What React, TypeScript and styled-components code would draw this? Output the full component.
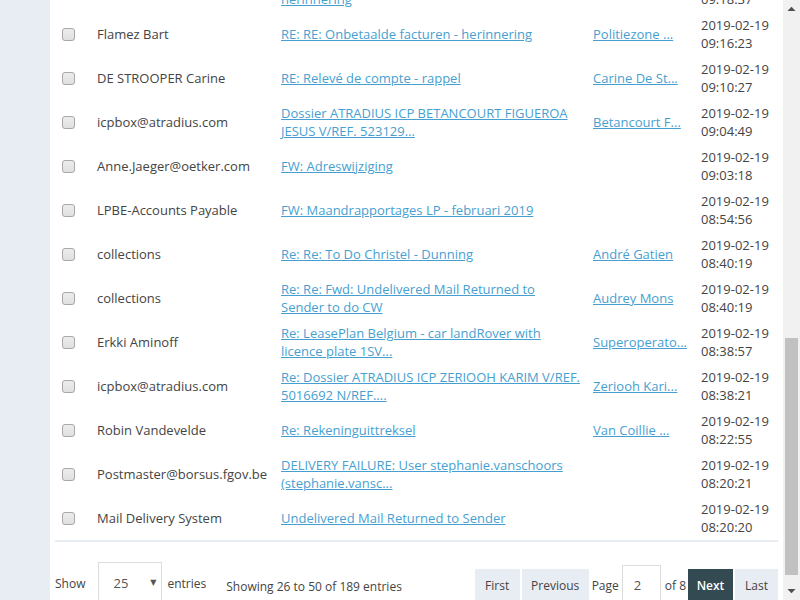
import React, { useLayoutEffect, useRef, useState } from "react";
import styled, { createGlobalStyle } from "styled-components";

const Global = createGlobalStyle`
  html, body { margin: 0; padding: 0; height: 100%; overflow: hidden; }
  body { font-family: "Open Sans", "DejaVu Sans", sans-serif; font-size: 13px; color: #444; }
  #root { height: 100%; }
  * { box-sizing: border-box; }
`;

const Frame = styled.div`
  display: flex;
  height: 100vh;
`;

const Viewport = styled.div`
  flex: 1;
  min-width: 0;
  overflow: hidden;
  background: #fff;
`;

const ScrollBar = styled.div`
  width: 17px;
  flex-shrink: 0;
  display: flex;
  flex-direction: column;
  background: #f1f1f1;
`;

const ScrollArrow = styled.div`
  height: 17px;
  flex-shrink: 0;
  display: flex;
  align-items: center;
  justify-content: center;
`;

const ScrollTrack = styled.div`
  flex: 1;
  display: flex;
  flex-direction: column;
  padding: 0 2px;
`;

const Thumb = styled.div`
  background: #c1c1c1;
  flex-shrink: 0;
`;

const Page = styled.div`
  display: flex;
  min-height: 100%;
`;

const Sidebar = styled.aside`
  width: 50px;
  flex-shrink: 0;
  background: #e8ecf3;
`;

const Main = styled.main`
  flex: 1;
  min-width: 0;
  background: #fff;
  padding: 0 5px 14px;
`;

const PageHeader = styled.header`
  display: flex;
  align-items: center;
  justify-content: space-between;
  height: 96px;
  padding: 0 8px;
  border-bottom: 2px solid #e8ecf3;
`;

const Title = styled.h1`
  margin: 0;
  font-size: 22px;
  font-weight: 400;
  color: #333;
`;

const Toolbar = styled.div`
  display: flex;
  align-items: center;
  gap: 8px;
  height: 112px;
  padding: 0 8px;
`;

const ToolButton = styled.button`
  height: 32px;
  padding: 0 12px;
  border: 0;
  background: #e8ecf3;
  color: #333;
  font: inherit;
`;

const SearchBox = styled.input`
  margin-left: auto;
  width: 220px;
  height: 32px;
  border: 1px solid #ddd;
  padding: 0 10px;
  font: inherit;
`;

const Table = styled.table`
  width: 100%;
  border-collapse: collapse;
  table-layout: fixed;
  border-bottom: 2px solid #e8ecf3;
`;

const Col = styled.col<{ $w?: number }>`
  width: ${(p) => (p.$w ? `${p.$w}px` : "auto")};
`;

const Th = styled.th`
  height: 44px;
  padding: 4px 4px 4px 8px;
  text-align: left;
  font-weight: 600;
  color: #333;
  border-bottom: 2px solid #e8ecf3;
`;

const Row = styled.tr`
  height: 44px;
`;

const Td = styled.td<{ $check?: boolean }>`
  padding: ${(p) => (p.$check ? "4px 4px 4px 7px" : "4px 4px 4px 8px")};
  vertical-align: middle;
  line-height: 18px;
  font-size: 13px;
  color: #444;
  overflow-wrap: break-word;
`;

const Check = styled.input.attrs({ type: "checkbox" })`
  appearance: none;
  display: block;
  margin: 0;
  width: 13px;
  height: 13px;
  border: 1px solid #a8a8a8;
  border-radius: 3px;
  background: linear-gradient(#ececec, #e0e0e0);
`;

const Link = styled.a`
  color: #479fd1;
  text-decoration: underline;
  cursor: pointer;
`;

const Footer = styled.div`
  display: flex;
  align-items: flex-start;
  padding-top: 20px;
  font-size: 12px;
`;

const ShowGroup = styled.div`
  display: flex;
  align-items: center;
  height: 42px;
  color: #444;
`;

const SelectWrap = styled.div`
  position: relative;
  margin: 0 5px 0 13px;
  &::after {
    content: "▼";
    position: absolute;
    right: 6px;
    top: 14px;
    font-size: 8px;
    color: #555;
    pointer-events: none;
  }
`;

const Select = styled.select`
  appearance: none;
  width: 64px;
  height: 42px;
  border: 1px solid #ddd;
  border-radius: 0;
  background: #fff;
  padding: 0 0 0 14px;
  font-family: inherit;
  font-size: 13px;
  color: #555;
`;

const Info = styled.div`
  margin: 16px 0 0 20px;
  line-height: 18px;
  color: #444;
`;

const Pager = styled.div`
  margin: 3px 0 0 auto;
  display: flex;
  align-items: center;
  gap: 2px;
`;

const PageButton = styled.button<{ $active?: boolean; $min?: number }>`
  height: 32px;
  min-width: ${(p) => p.$min ?? 45}px;
  padding: 0 8px;
  border: 0;
  border-radius: 0;
  font-family: inherit;
  font-size: 12px;
  font-weight: ${(p) => (p.$active ? 600 : 400)};
  background: ${(p) => (p.$active ? "#344a53" : "#e8ecf3")};
  color: ${(p) => (p.$active ? "#fff" : "#444")};
`;

const PagerLabel = styled.span<{ $ml?: number; $mr?: number }>`
  color: #444;
  margin: 0 ${(p) => p.$mr ?? 1}px 0 ${(p) => p.$ml ?? 1}px;
`;

const PageInput = styled.input`
  width: 39px;
  height: 40px;
  border: 1px solid #ddd;
  padding: 0 0 0 11px;
  font-family: inherit;
  font-size: 13px;
  color: #555;
`;

type Mail = { from: string; subject: string; assignee?: string; date: string };

const earlier: Mail[] = [
  { from: "facturatie@proximus.be", subject: "Herinnering factuur 20190211", assignee: "Jan Peeters", date: "2019-02-19 10:42:11" },
  { from: "collections", subject: "Re: Betalingsplan klant 40221", assignee: "André Gatien", date: "2019-02-19 10:31:05" },
  { from: "info@engie.be", subject: "Uw maandelijks overzicht", date: "2019-02-19 10:20:48" },
  { from: "icpbox@atradius.com", subject: "Dossier ATRADIUS ICP JANSSENS PETER V/REF. 522871...", assignee: "Janssens P...", date: "2019-02-19 10:12:30" },
  { from: "Marc Dubois", subject: "RE: Aanmaning", assignee: "Audrey Mons", date: "2019-02-19 10:05:02" },
  { from: "LPBE-Accounts Payable", subject: "FW: Creditnota januari 2019", date: "2019-02-19 09:58:44" },
  { from: "collections", subject: "Re: To Do Christel - Dunning", assignee: "André Gatien", date: "2019-02-19 09:51:17" },
  { from: "Sophie Claes", subject: "Vraag omtrent factuur", assignee: "Van Coillie ...", date: "2019-02-19 09:44:39" },
  { from: "noreply@bpost.be", subject: "Uw zending is onderweg", date: "2019-02-19 09:40:03" },
  { from: "Erkki Aminoff", subject: "Re: LeasePlan Belgium - contract update", assignee: "Superoperato...", date: "2019-02-19 09:33:26" },
  { from: "Robin Vandevelde", subject: "Re: Openstaande posten", assignee: "Van Coillie ...", date: "2019-02-19 09:27:50" },
  { from: "DE STROOPER Carine", subject: "RE: Relevé de compte", assignee: "Carine De St...", date: "2019-02-19 09:21:14" },
  { from: "Politiezone Regio", subject: "RE: RE: RE: Onbetaalde facturen Politiezone - herinnering", assignee: "Politiezone ...", date: "2019-02-19 09:18:37" },
];

const visible: Mail[] = [
  { from: "Flamez Bart", subject: "RE: RE: Onbetaalde facturen - herinnering", assignee: "Politiezone ...", date: "2019-02-19 09:16:23" },
  { from: "DE STROOPER Carine", subject: "RE: Relevé de compte - rappel", assignee: "Carine De St...", date: "2019-02-19 09:10:27" },
  { from: "icpbox@atradius.com", subject: "Dossier ATRADIUS ICP BETANCOURT FIGUEROA JESUS V/REF. 523129...", assignee: "Betancourt F...", date: "2019-02-19 09:04:49" },
  { from: "Anne.Jaeger@oetker.com", subject: "FW: Adreswijziging", date: "2019-02-19 09:03:18" },
  { from: "LPBE-Accounts Payable", subject: "FW: Maandrapportages LP - februari 2019", date: "2019-02-19 08:54:56" },
  { from: "collections", subject: "Re: Re: To Do Christel - Dunning", assignee: "André Gatien", date: "2019-02-19 08:40:19" },
  { from: "collections", subject: "Re: Re: Fwd: Undelivered Mail Returned to Sender to do CW", assignee: "Audrey Mons", date: "2019-02-19 08:40:19" },
  { from: "Erkki Aminoff", subject: "Re: LeasePlan Belgium - car landRover with licence plate 1SV...", assignee: "Superoperato...", date: "2019-02-19 08:38:57" },
  { from: "icpbox@atradius.com", subject: "Re: Dossier ATRADIUS ICP ZERIOOH KARIM V/REF. 5016692 N/REF....", assignee: "Zeriooh Kari...", date: "2019-02-19 08:38:21" },
  { from: "Robin Vandevelde", subject: "Re: Rekeninguittreksel", assignee: "Van Coillie ...", date: "2019-02-19 08:22:55" },
  { from: "Postmaster@borsus.fgov.be", subject: "DELIVERY FAILURE: User stephanie.vanschoors (stephanie.vansc...", date: "2019-02-19 08:20:21" },
  { from: "Mail Delivery System", subject: "Undelivered Mail Returned to Sender", date: "2019-02-19 08:20:20" },
];

const MailRow = React.forwardRef<HTMLTableRowElement, { mail: Mail }>(({ mail }, ref) => (
  <Row ref={ref}>
    <Td $check>
      <Check />
    </Td>
    <Td>{mail.from}</Td>
    <Td>
      <Link>{mail.subject}</Link>
    </Td>
    <Td>{mail.assignee ? <Link>{mail.assignee}</Link> : null}</Td>
    <Td>{mail.date}</Td>
  </Row>
));

const Arrow = ({ up }: { up?: boolean }) => (
  <svg width="9" height="5" viewBox="0 0 9 5" aria-hidden="true">
    <path d={up ? "M0.5 5h8L4.5 0.8z" : "M0.5 0h8L4.5 4.2z"} fill="#505050" />
  </svg>
);

export default function App() {
  const scrollRef = useRef<HTMLDivElement>(null);
  const anchorRef = useRef<HTMLTableRowElement>(null);
  const trackRef = useRef<HTMLDivElement>(null);
  const [thumb, setThumb] = useState({ top: 0, height: 40 });

  useLayoutEffect(() => {
    const c = scrollRef.current;
    const a = anchorRef.current;
    const t = trackRef.current;
    if (!c || !a || !t) return;
    const offset = a.getBoundingClientRect().top - c.getBoundingClientRect().top + c.scrollTop;
    c.scrollTop = offset - 12;
    const trackH = t.clientHeight;
    const h = Math.max(20, (trackH * c.clientHeight) / c.scrollHeight);
    const maxScroll = c.scrollHeight - c.clientHeight;
    const top = maxScroll > 0 ? ((trackH - h) * c.scrollTop) / maxScroll : 0;
    setThumb({ top, height: h });
  }, []);

  return (
    <>
      <Global />
      <Frame>
        <Viewport ref={scrollRef}>
          <Page>
            <Sidebar />
            <Main>
              <PageHeader>
                <Title>E-mails</Title>
              </PageHeader>
              <Toolbar>
                <ToolButton>Toewijzen</ToolButton>
                <ToolButton>Archiveren</ToolButton>
                <SearchBox placeholder="Zoeken..." />
              </Toolbar>
              <Table>
                <colgroup>
                  <Col $w={34} />
                  <Col $w={184} />
                  <Col $w={312} />
                  <Col $w={108} />
                  <Col />
                </colgroup>
                <thead>
                  <tr>
                    <Th />
                    <Th>Van</Th>
                    <Th>Onderwerp</Th>
                    <Th>Toegewezen</Th>
                    <Th>Datum</Th>
                  </tr>
                </thead>
                <tbody>
                  {earlier.map((m, i) => (
                    <MailRow key={`e${i}`} mail={m} />
                  ))}
                  {visible.map((m, i) => (
                    <MailRow key={`v${i}`} mail={m} ref={i === 0 ? anchorRef : undefined} />
                  ))}
                </tbody>
              </Table>
              <Footer>
                <ShowGroup>
                  <span>Show</span>
                  <SelectWrap>
                    <Select defaultValue="25">
                      <option value="10">10</option>
                      <option value="25">25</option>
                      <option value="50">50</option>
                      <option value="100">100</option>
                    </Select>
                  </SelectWrap>
                  <span>entries</span>
                </ShowGroup>
                <Info>Showing 26 to 50 of 189 entries</Info>
                <Pager>
                  <PageButton>First</PageButton>
                  <PageButton $min={67}>Previous</PageButton>
                  <PagerLabel>Page</PagerLabel>
                  <PageInput defaultValue="2" />
                  <PagerLabel $ml={2} $mr={0}>of 8</PagerLabel>
                  <PageButton $active>Next</PageButton>
                  <PageButton $min={43}>Last</PageButton>
                </Pager>
              </Footer>
            </Main>
          </Page>
        </Viewport>
        <ScrollBar>
          <ScrollArrow>
            <Arrow up />
          </ScrollArrow>
          <ScrollTrack ref={trackRef}>
            <Thumb style={{ marginTop: thumb.top, height: thumb.height }} />
          </ScrollTrack>
          <ScrollArrow>
            <Arrow />
          </ScrollArrow>
        </ScrollBar>
      </Frame>
    </>
  );
}
